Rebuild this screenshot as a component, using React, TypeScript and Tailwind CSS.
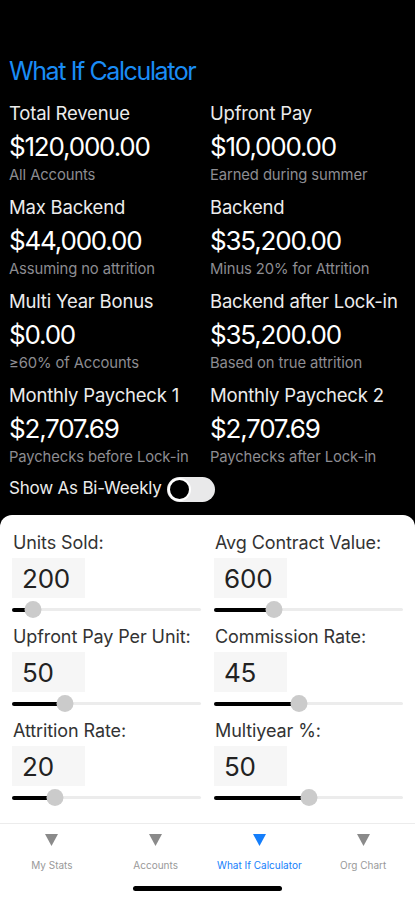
import React from "react";

const stats = [
  ["Total Revenue", "$120,000.00", "All Accounts", "Upfront Pay", "$10,000.00", "Earned during summer"],
  ["Max Backend", "$44,000.00", "Assuming no attrition", "Backend", "$35,200.00", "Minus 20% for Attrition"],
  ["Multi Year Bonus", "$0.00", "≥60% of Accounts", "Backend after Lock-in", "$35,200.00", "Based on true attrition"],
  ["Monthly Paycheck 1", "$2,707.69", "Paychecks before Lock-in", "Monthly Paycheck 2", "$2,707.69", "Paychecks after Lock-in"],
];

function Stat({ label, value, sub }: { label: string; value: string; sub: string }) {
  return (
    <div className="flex flex-col">
      <div className="text-[18.5px] leading-[22px] text-[#ececec] tracking-[-0.2px]">{label}</div>
      <div className="text-[26px] leading-[32px] mt-[7px] text-white tracking-[-1.2px]">{value}</div>
      <div className="text-[14.8px] leading-[18px] mt-[3px] text-[#8d8d92] tracking-[-0.1px]">{sub}</div>
    </div>
  );
}

function Field({ label, value, pct }: { label: string; value: string; pct: number }) {
  return (
    <div className="flex flex-col">
      <div className="text-[18px] leading-[20px] text-[#333] tracking-[-0.1px] pl-[1px]">{label}</div>
      <div className="mt-[5px] w-[73px] h-[40px] bg-[#f6f6f6] flex items-center pl-[10px] text-[26px] text-[#222] tracking-[-0.2px]">
        {value}
      </div>
      <div className="relative h-[23px] flex items-center">
        <div className="w-full h-[3px] bg-[#ececec] rounded-full" />
        <div className="absolute left-0 h-[4px] bg-black rounded-full" style={{ width: `${pct}%` }} />
        <div
          className="absolute w-[17px] h-[17px] rounded-full bg-[#cbcbcb] -translate-x-1/2"
          style={{ left: `${pct}%` }}
        />
      </div>
    </div>
  );
}

function Tri({ color }: { color: string }) {
  return (
    <svg width="13" height="12" viewBox="0 0 13 12">
      <polygon points="0,0 13,0 6.5,12" fill={color} />
    </svg>
  );
}

export default function App() {
  return (
    <div className="w-[415px] h-[900px] bg-black flex flex-col overflow-hidden" style={{ fontFamily: "Inter, 'Noto Sans', sans-serif" }}>
      <div className="px-[9px] pt-[56px]">
        <div className="text-[25px] leading-[30px] text-[#1a8cf5] tracking-[-1.4px]">What If Calculator</div>
        <div className="grid grid-cols-[201px_1fr] mt-[16px] gap-y-[12px]">
          {stats.map((r, i) => (
            <React.Fragment key={i}>
              <Stat label={r[0]} value={r[1]} sub={r[2]} />
              <Stat label={r[3]} value={r[4]} sub={r[5]} />
            </React.Fragment>
          ))}
        </div>
        <div className="flex items-center mt-[10px] h-[26px]">
          <span className="text-[17px] text-[#ececec] tracking-[-0.2px]">Show As Bi-Weekly</span>
          <div className="ml-[5px] w-[48px] h-[25px] rounded-full bg-[#e9e9ea] flex items-center pl-[1px]">
            <div className="w-[23px] h-[23px] rounded-full bg-black border-[2px] border-white" />
          </div>
        </div>
      </div>
      <div className="mt-[13px] flex-1 bg-white rounded-t-[12px] flex flex-col">
        <div className="grid grid-cols-2 gap-x-[13px] px-[12px] pt-[18px] gap-y-[6px]">
          <Field label="Units Sold:" value="200" pct={11} />
          <Field label="Avg Contract Value:" value="600" pct={32} />
          <Field label="Upfront Pay Per Unit:" value="50" pct={28} />
          <Field label="Commission Rate:" value="45" pct={45} />
          <Field label="Attrition Rate:" value="20" pct={23} />
          <Field label="Multiyear %:" value="50" pct={50} />
        </div>
        <div className="mt-auto border-t border-[#ececec] h-[77px] flex flex-col">
          <div className="grid grid-cols-4 pt-[10px]">
            {[
              ["My Stats", false],
              ["Accounts", false],
              ["What If Calculator", true],
              ["Org Chart", false],
            ].map(([l, a]) => (
              <div key={l as string} className="flex flex-col items-center">
                <Tri color={a ? "#147efb" : "#8a8a8a"} />
                <span className={`mt-[13px] text-[10px] leading-[12px] ${a ? "text-[#147efb]" : "text-[#999]"}`}>{l as string}</span>
              </div>
            ))}
          </div>
          <div className="mt-[15px] mx-auto w-[149px] h-[5px] rounded-full bg-black" />
        </div>
      </div>
    </div>
  );
}
